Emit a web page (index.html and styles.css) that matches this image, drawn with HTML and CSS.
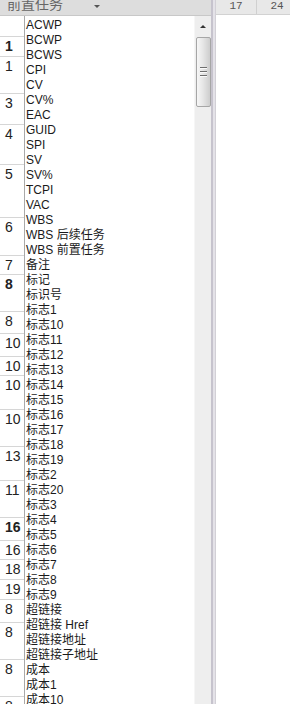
FILE: index.html
```html
<!DOCTYPE html>
<html>
<head>
	<title>前置任务</title>
	<link rel="stylesheet" href="styles.css">
</head>
<body>
	<div class="sheet">
		<div class="left">
			<div class="head-left">
				<span class="head-title">前置任务</span>
				<span class="head-arrow"></span>
			</div>
			<div class="left-body">
				<div class="nums">
					<div class="num"></div>
					<div class="num bold">1</div>
					<div class="num">1</div>
					<div class="num">3</div>
					<div class="num">4</div>
					<div class="num">5</div>
					<div class="num">6</div>
					<div class="num">7</div>
					<div class="num bold">8</div>
					<div class="num">8</div>
					<div class="num">10</div>
					<div class="num">10</div>
					<div class="num">10</div>
					<div class="num">10</div>
					<div class="num">13</div>
					<div class="num">11</div>
					<div class="num bold">16</div>
					<div class="num">16</div>
					<div class="num">18</div>
					<div class="num">19</div>
					<div class="num">8</div>
					<div class="num">8</div>
					<div class="num">8</div>
					<div class="num">8</div>
				</div>
				<div class="dropdown">
					<ul class="options">
						<li>ACWP</li>
						<li>BCWP</li>
						<li>BCWS</li>
						<li>CPI</li>
						<li>CV</li>
						<li>CV%</li>
						<li>EAC</li>
						<li>GUID</li>
						<li>SPI</li>
						<li>SV</li>
						<li>SV%</li>
						<li>TCPI</li>
						<li>VAC</li>
						<li>WBS</li>
						<li>WBS 后续任务</li>
						<li>WBS 前置任务</li>
						<li>备注</li>
						<li>标记</li>
						<li>标识号</li>
						<li>标志1</li>
						<li>标志10</li>
						<li>标志11</li>
						<li>标志12</li>
						<li>标志13</li>
						<li>标志14</li>
						<li>标志15</li>
						<li>标志16</li>
						<li>标志17</li>
						<li>标志18</li>
						<li>标志19</li>
						<li>标志2</li>
						<li>标志20</li>
						<li>标志3</li>
						<li>标志4</li>
						<li>标志5</li>
						<li>标志6</li>
						<li>标志7</li>
						<li>标志8</li>
						<li>标志9</li>
						<li>超链接</li>
						<li>超链接 Href</li>
						<li>超链接地址</li>
						<li>超链接子地址</li>
						<li>成本</li>
						<li>成本1</li>
						<li>成本10</li>
						<li>成本2</li>
					</ul>
					<div class="scrollbar">
						<div class="scroll-up"></div>
						<div class="thumb">
							<span class="grip"></span>
							<span class="grip"></span>
							<span class="grip"></span>
						</div>
					</div>
				</div>
			</div>
		</div>
		<div class="splitter"></div>
		<div class="right">
			<div class="head-right">
				<div class="day">17</div>
				<div class="day">24</div>
			</div>
		</div>
	</div>
</body>
</html>
```

FILE: styles.css
```css
		body {
			margin: 0;
			padding: 0;
			background: #fff;
			font-family: "Liberation Sans", "Noto Sans CJK SC", sans-serif;
			color: #1a1a1a;
			overflow: hidden;
		}
		.sheet {
			display: flex;
			height: 704px;
			overflow: hidden;
		}
		.left {
			width: 211px;
			flex-shrink: 0;
			display: flex;
			flex-direction: column;
		}
		.head-left {
			height: 16px;
			box-sizing: border-box;
			background-color: #dddddd;
			border-bottom: 1px solid #c8c8c8;
			display: flex;
			align-items: flex-start;
			overflow: hidden;
			padding-left: 7px;
		}
		.head-title {
			font-size: 14px;
			line-height: 14px;
			color: #666;
			margin-top: -3px;
			width: 87px;
		}
		.head-arrow {
			margin-top: 5px;
			width: 0;
			height: 0;
			border-left: 3px solid transparent;
			border-right: 3px solid transparent;
			border-top: 3px solid #555;
		}
		.left-body {
			flex: 1;
			display: flex;
			overflow: hidden;
		}
		.nums {
			width: 24px;
			flex-shrink: 0;
			display: grid;
			grid-template-rows: 21px 20px 37px 31px 40px 53px 38px 19px 37px 22px 23px 19px 34px 37px 34px 37px 23px 19px 20px 20px 23px 37px 37px 40px;
		}
		.num {
			box-sizing: border-box;
			border-bottom: 1px solid #d6d6d6;
			font-size: 14px;
			line-height: 16px;
			padding: 1px 0 0 5px;
			color: #222;
			overflow: hidden;
		}
		.num.bold {
			font-weight: bold;
		}
		.dropdown {
			flex: 1;
			display: flex;
			border-left: 1px solid #a9a9a9;
			background: #fff;
		}
		.options {
			flex: 1;
			list-style: none;
			margin: 0;
			padding: 2px 0 0 1px;
			overflow: hidden;
		}
		.options li {
			height: 15px;
			line-height: 15px;
			font-size: 12px;
			white-space: nowrap;
		}
		.scrollbar {
			width: 17px;
			flex-shrink: 0;
			box-sizing: border-box;
			background-color: #eeeeee;
			border-left: 1px solid #f6f6f6;
			display: flex;
			flex-direction: column;
			align-items: center;
		}
		.scroll-up {
			margin-top: 9px;
			width: 0;
			height: 0;
			border-left: 3px solid transparent;
			border-right: 3px solid transparent;
			border-bottom: 3px solid #333;
		}
		.thumb {
			margin-top: 9px;
			width: 15px;
			height: 70px;
			box-sizing: border-box;
			border: 1px solid #a6a6a6;
			border-radius: 2px;
			background: linear-gradient(to right, #f7f7f7, #e6e6e6 45%, #cdcdcd);
			display: flex;
			flex-direction: column;
			align-items: center;
			justify-content: center;
			gap: 2px;
		}
		.grip {
			display: block;
			width: 7px;
			height: 1px;
			background-color: #6e6e6e;
			border-bottom: 1px solid #fafafa;
		}
		.splitter {
			width: 5px;
			flex-shrink: 0;
			box-sizing: border-box;
			background-color: #e4e2e8;
			border-left: 2px solid #c6c3cd;
			border-right: 1px solid #d2d0d6;
		}
		.right {
			flex: 1;
			min-width: 0;
			overflow: hidden;
		}
		.head-right {
			height: 15px;
			box-sizing: border-box;
			background-color: #e8e8e8;
			border-bottom: 1px solid #d2d2d2;
			display: flex;
		}
		.day {
			width: 41px;
			flex-shrink: 0;
			box-sizing: border-box;
			border-right: 1px solid #d0d0d0;
			text-align: center;
			font-family: "Liberation Mono", monospace;
			font-size: 11px;
			line-height: 13px;
			color: #555;
		}
```
